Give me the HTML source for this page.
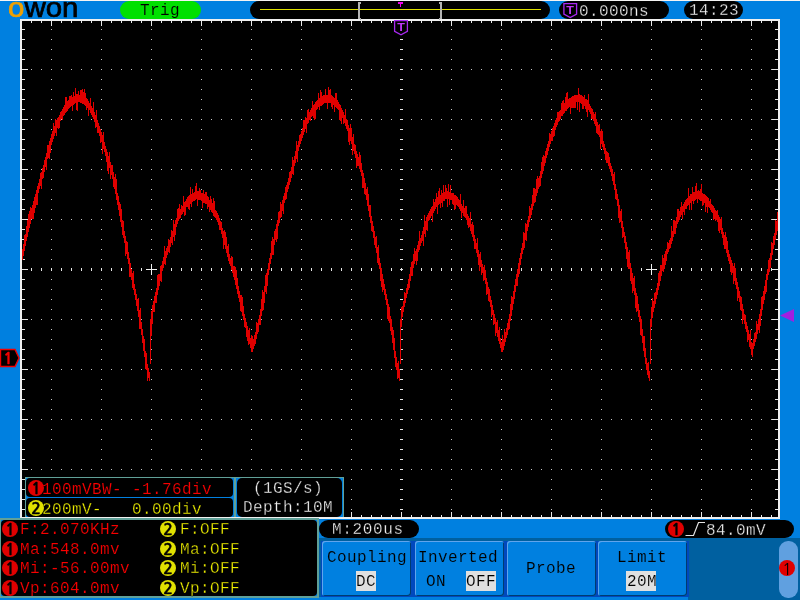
<!DOCTYPE html>
<html><head><meta charset="utf-8"><title>OWON</title>
<style>
html,body{margin:0;padding:0}
body{width:800px;height:600px;background:#0080e0;position:relative;overflow:hidden;font-family:"Liberation Mono",monospace;font-size:16px;letter-spacing:.4px}
div,span{position:absolute;white-space:pre;box-sizing:border-box}
.t{line-height:20px;height:20px;will-change:transform}
.pill{background:#000;border-radius:9px;height:18px}
.w{color:#f0f0f0;-webkit-text-stroke:.3px #000}.r{color:#f80000;-webkit-text-stroke:.18px #000}.y{color:#f0f000;-webkit-text-stroke:.3px #000}.k{color:#000;-webkit-text-stroke:.12px #0080e0}.kg{-webkit-text-stroke-color:#00e000}.kh{-webkit-text-stroke-color:#e0e0e0}
.c{will-change:transform;width:16px;height:16px;border-radius:8px;font:bold 16px/18px "NanumGothic","Liberation Sans",sans-serif;-webkit-text-stroke:.4px;letter-spacing:0;text-align:center;color:#000}
.cr{background:#e00000}.cy{background:#e0e000}
.btn{top:541px;width:89px;height:55px;background:#0080e0;border-radius:3px;box-shadow:inset 1px 1px 0 #60a4ec,inset -1px -1px 0 #003c70}
.hl{background:#e0e0e0;height:20px;top:571px}
svg{position:absolute;left:0;top:0}
</style></head><body>
<!-- top bar -->
<div style="left:0;top:0;width:800px;height:1px;background:#f4f4f4"></div>
<div id="logo" style="will-change:transform;left:8px;top:-7px;font:27px/30px 'Liberation Sans',sans-serif;text-transform:lowercase;letter-spacing:0;color:#000;-webkit-text-stroke:.7px;transform:scaleX(1.09);transform-origin:0 0"><span style="position:static;color:#f0a000">O</span>WON</div>
<div style="left:120px;top:1px;width:81px;height:18px;border-radius:9px;background:#00e000"></div>
<div class="t k kg" style="left:140px;top:1px">Trig</div>
<div class="pill" style="left:250px;top:1px;width:300px"></div>
<div class="pill" style="left:559px;top:1px;width:110px"></div>
<div class="t w" style="left:579px;top:2px">0.000ns</div>
<div class="pill" style="left:684px;top:1px;width:59px"></div>
<div class="t w" style="left:689px;top:1px">14:23</div>
<!-- scope screen -->
<div style="left:20px;top:19px;width:760px;height:500px;background:#000;border:2px solid #f0f0f0"></div>
<svg width="800" height="600" viewBox="0 0 800 600" shape-rendering="crispEdges">
<path d="M51 29.5h1M51 39.5h1M51 49.5h1M51 59.5h1M51 69.5h1M51 79.5h1M51 89.5h1M51 99.5h1M51 109.5h1M51 119.5h1M51 129.5h1M51 139.5h1M51 149.5h1M51 159.5h1M51 169.5h1M51 179.5h1M51 189.5h1M51 199.5h1M51 209.5h1M51 219.5h1M51 229.5h1M51 239.5h1M51 249.5h1M51 259.5h1M51 269.5h1M51 279.5h1M51 289.5h1M51 299.5h1M51 309.5h1M51 319.5h1M51 329.5h1M51 339.5h1M51 349.5h1M51 359.5h1M51 369.5h1M51 379.5h1M51 389.5h1M51 399.5h1M51 409.5h1M51 419.5h1M51 429.5h1M51 439.5h1M51 449.5h1M51 459.5h1M51 469.5h1M51 479.5h1M51 489.5h1M51 499.5h1M51 509.5h1M101 29.5h1M101 39.5h1M101 49.5h1M101 59.5h1M101 69.5h1M101 79.5h1M101 89.5h1M101 99.5h1M101 109.5h1M101 119.5h1M101 129.5h1M101 139.5h1M101 149.5h1M101 159.5h1M101 169.5h1M101 179.5h1M101 189.5h1M101 199.5h1M101 209.5h1M101 219.5h1M101 229.5h1M101 239.5h1M101 249.5h1M101 259.5h1M101 269.5h1M101 279.5h1M101 289.5h1M101 299.5h1M101 309.5h1M101 319.5h1M101 329.5h1M101 339.5h1M101 349.5h1M101 359.5h1M101 369.5h1M101 379.5h1M101 389.5h1M101 399.5h1M101 409.5h1M101 419.5h1M101 429.5h1M101 439.5h1M101 449.5h1M101 459.5h1M101 469.5h1M101 479.5h1M101 489.5h1M101 499.5h1M101 509.5h1M151 29.5h1M151 39.5h1M151 49.5h1M151 59.5h1M151 69.5h1M151 79.5h1M151 89.5h1M151 99.5h1M151 109.5h1M151 119.5h1M151 129.5h1M151 139.5h1M151 149.5h1M151 159.5h1M151 169.5h1M151 179.5h1M151 189.5h1M151 199.5h1M151 209.5h1M151 219.5h1M151 229.5h1M151 239.5h1M151 249.5h1M151 259.5h1M151 269.5h1M151 279.5h1M151 289.5h1M151 299.5h1M151 309.5h1M151 319.5h1M151 329.5h1M151 339.5h1M151 349.5h1M151 359.5h1M151 369.5h1M151 379.5h1M151 389.5h1M151 399.5h1M151 409.5h1M151 419.5h1M151 429.5h1M151 439.5h1M151 449.5h1M151 459.5h1M151 469.5h1M151 479.5h1M151 489.5h1M151 499.5h1M151 509.5h1M201 29.5h1M201 39.5h1M201 49.5h1M201 59.5h1M201 69.5h1M201 79.5h1M201 89.5h1M201 99.5h1M201 109.5h1M201 119.5h1M201 129.5h1M201 139.5h1M201 149.5h1M201 159.5h1M201 169.5h1M201 179.5h1M201 189.5h1M201 199.5h1M201 209.5h1M201 219.5h1M201 229.5h1M201 239.5h1M201 249.5h1M201 259.5h1M201 269.5h1M201 279.5h1M201 289.5h1M201 299.5h1M201 309.5h1M201 319.5h1M201 329.5h1M201 339.5h1M201 349.5h1M201 359.5h1M201 369.5h1M201 379.5h1M201 389.5h1M201 399.5h1M201 409.5h1M201 419.5h1M201 429.5h1M201 439.5h1M201 449.5h1M201 459.5h1M201 469.5h1M201 479.5h1M201 489.5h1M201 499.5h1M201 509.5h1M251 29.5h1M251 39.5h1M251 49.5h1M251 59.5h1M251 69.5h1M251 79.5h1M251 89.5h1M251 99.5h1M251 109.5h1M251 119.5h1M251 129.5h1M251 139.5h1M251 149.5h1M251 159.5h1M251 169.5h1M251 179.5h1M251 189.5h1M251 199.5h1M251 209.5h1M251 219.5h1M251 229.5h1M251 239.5h1M251 249.5h1M251 259.5h1M251 269.5h1M251 279.5h1M251 289.5h1M251 299.5h1M251 309.5h1M251 319.5h1M251 329.5h1M251 339.5h1M251 349.5h1M251 359.5h1M251 369.5h1M251 379.5h1M251 389.5h1M251 399.5h1M251 409.5h1M251 419.5h1M251 429.5h1M251 439.5h1M251 449.5h1M251 459.5h1M251 469.5h1M251 479.5h1M251 489.5h1M251 499.5h1M251 509.5h1M301 29.5h1M301 39.5h1M301 49.5h1M301 59.5h1M301 69.5h1M301 79.5h1M301 89.5h1M301 99.5h1M301 109.5h1M301 119.5h1M301 129.5h1M301 139.5h1M301 149.5h1M301 159.5h1M301 169.5h1M301 179.5h1M301 189.5h1M301 199.5h1M301 209.5h1M301 219.5h1M301 229.5h1M301 239.5h1M301 249.5h1M301 259.5h1M301 269.5h1M301 279.5h1M301 289.5h1M301 299.5h1M301 309.5h1M301 319.5h1M301 329.5h1M301 339.5h1M301 349.5h1M301 359.5h1M301 369.5h1M301 379.5h1M301 389.5h1M301 399.5h1M301 409.5h1M301 419.5h1M301 429.5h1M301 439.5h1M301 449.5h1M301 459.5h1M301 469.5h1M301 479.5h1M301 489.5h1M301 499.5h1M301 509.5h1M351 29.5h1M351 39.5h1M351 49.5h1M351 59.5h1M351 69.5h1M351 79.5h1M351 89.5h1M351 99.5h1M351 109.5h1M351 119.5h1M351 129.5h1M351 139.5h1M351 149.5h1M351 159.5h1M351 169.5h1M351 179.5h1M351 189.5h1M351 199.5h1M351 209.5h1M351 219.5h1M351 229.5h1M351 239.5h1M351 249.5h1M351 259.5h1M351 269.5h1M351 279.5h1M351 289.5h1M351 299.5h1M351 309.5h1M351 319.5h1M351 329.5h1M351 339.5h1M351 349.5h1M351 359.5h1M351 369.5h1M351 379.5h1M351 389.5h1M351 399.5h1M351 409.5h1M351 419.5h1M351 429.5h1M351 439.5h1M351 449.5h1M351 459.5h1M351 469.5h1M351 479.5h1M351 489.5h1M351 499.5h1M351 509.5h1M451 29.5h1M451 39.5h1M451 49.5h1M451 59.5h1M451 69.5h1M451 79.5h1M451 89.5h1M451 99.5h1M451 109.5h1M451 119.5h1M451 129.5h1M451 139.5h1M451 149.5h1M451 159.5h1M451 169.5h1M451 179.5h1M451 189.5h1M451 199.5h1M451 209.5h1M451 219.5h1M451 229.5h1M451 239.5h1M451 249.5h1M451 259.5h1M451 269.5h1M451 279.5h1M451 289.5h1M451 299.5h1M451 309.5h1M451 319.5h1M451 329.5h1M451 339.5h1M451 349.5h1M451 359.5h1M451 369.5h1M451 379.5h1M451 389.5h1M451 399.5h1M451 409.5h1M451 419.5h1M451 429.5h1M451 439.5h1M451 449.5h1M451 459.5h1M451 469.5h1M451 479.5h1M451 489.5h1M451 499.5h1M451 509.5h1M501 29.5h1M501 39.5h1M501 49.5h1M501 59.5h1M501 69.5h1M501 79.5h1M501 89.5h1M501 99.5h1M501 109.5h1M501 119.5h1M501 129.5h1M501 139.5h1M501 149.5h1M501 159.5h1M501 169.5h1M501 179.5h1M501 189.5h1M501 199.5h1M501 209.5h1M501 219.5h1M501 229.5h1M501 239.5h1M501 249.5h1M501 259.5h1M501 269.5h1M501 279.5h1M501 289.5h1M501 299.5h1M501 309.5h1M501 319.5h1M501 329.5h1M501 339.5h1M501 349.5h1M501 359.5h1M501 369.5h1M501 379.5h1M501 389.5h1M501 399.5h1M501 409.5h1M501 419.5h1M501 429.5h1M501 439.5h1M501 449.5h1M501 459.5h1M501 469.5h1M501 479.5h1M501 489.5h1M501 499.5h1M501 509.5h1M551 29.5h1M551 39.5h1M551 49.5h1M551 59.5h1M551 69.5h1M551 79.5h1M551 89.5h1M551 99.5h1M551 109.5h1M551 119.5h1M551 129.5h1M551 139.5h1M551 149.5h1M551 159.5h1M551 169.5h1M551 179.5h1M551 189.5h1M551 199.5h1M551 209.5h1M551 219.5h1M551 229.5h1M551 239.5h1M551 249.5h1M551 259.5h1M551 269.5h1M551 279.5h1M551 289.5h1M551 299.5h1M551 309.5h1M551 319.5h1M551 329.5h1M551 339.5h1M551 349.5h1M551 359.5h1M551 369.5h1M551 379.5h1M551 389.5h1M551 399.5h1M551 409.5h1M551 419.5h1M551 429.5h1M551 439.5h1M551 449.5h1M551 459.5h1M551 469.5h1M551 479.5h1M551 489.5h1M551 499.5h1M551 509.5h1M601 29.5h1M601 39.5h1M601 49.5h1M601 59.5h1M601 69.5h1M601 79.5h1M601 89.5h1M601 99.5h1M601 109.5h1M601 119.5h1M601 129.5h1M601 139.5h1M601 149.5h1M601 159.5h1M601 169.5h1M601 179.5h1M601 189.5h1M601 199.5h1M601 209.5h1M601 219.5h1M601 229.5h1M601 239.5h1M601 249.5h1M601 259.5h1M601 269.5h1M601 279.5h1M601 289.5h1M601 299.5h1M601 309.5h1M601 319.5h1M601 329.5h1M601 339.5h1M601 349.5h1M601 359.5h1M601 369.5h1M601 379.5h1M601 389.5h1M601 399.5h1M601 409.5h1M601 419.5h1M601 429.5h1M601 439.5h1M601 449.5h1M601 459.5h1M601 469.5h1M601 479.5h1M601 489.5h1M601 499.5h1M601 509.5h1M651 29.5h1M651 39.5h1M651 49.5h1M651 59.5h1M651 69.5h1M651 79.5h1M651 89.5h1M651 99.5h1M651 109.5h1M651 119.5h1M651 129.5h1M651 139.5h1M651 149.5h1M651 159.5h1M651 169.5h1M651 179.5h1M651 189.5h1M651 199.5h1M651 209.5h1M651 219.5h1M651 229.5h1M651 239.5h1M651 249.5h1M651 259.5h1M651 269.5h1M651 279.5h1M651 289.5h1M651 299.5h1M651 309.5h1M651 319.5h1M651 329.5h1M651 339.5h1M651 349.5h1M651 359.5h1M651 369.5h1M651 379.5h1M651 389.5h1M651 399.5h1M651 409.5h1M651 419.5h1M651 429.5h1M651 439.5h1M651 449.5h1M651 459.5h1M651 469.5h1M651 479.5h1M651 489.5h1M651 499.5h1M651 509.5h1M701 29.5h1M701 39.5h1M701 49.5h1M701 59.5h1M701 69.5h1M701 79.5h1M701 89.5h1M701 99.5h1M701 109.5h1M701 119.5h1M701 129.5h1M701 139.5h1M701 149.5h1M701 159.5h1M701 169.5h1M701 179.5h1M701 189.5h1M701 199.5h1M701 209.5h1M701 219.5h1M701 229.5h1M701 239.5h1M701 249.5h1M701 259.5h1M701 269.5h1M701 279.5h1M701 289.5h1M701 299.5h1M701 309.5h1M701 319.5h1M701 329.5h1M701 339.5h1M701 349.5h1M701 359.5h1M701 369.5h1M701 379.5h1M701 389.5h1M701 399.5h1M701 409.5h1M701 419.5h1M701 429.5h1M701 439.5h1M701 449.5h1M701 459.5h1M701 469.5h1M701 479.5h1M701 489.5h1M701 499.5h1M701 509.5h1M751 29.5h1M751 39.5h1M751 49.5h1M751 59.5h1M751 69.5h1M751 79.5h1M751 89.5h1M751 99.5h1M751 109.5h1M751 119.5h1M751 129.5h1M751 139.5h1M751 149.5h1M751 159.5h1M751 169.5h1M751 179.5h1M751 189.5h1M751 199.5h1M751 209.5h1M751 219.5h1M751 229.5h1M751 239.5h1M751 249.5h1M751 259.5h1M751 269.5h1M751 279.5h1M751 289.5h1M751 299.5h1M751 309.5h1M751 319.5h1M751 329.5h1M751 339.5h1M751 349.5h1M751 359.5h1M751 369.5h1M751 379.5h1M751 389.5h1M751 399.5h1M751 409.5h1M751 419.5h1M751 429.5h1M751 439.5h1M751 449.5h1M751 459.5h1M751 469.5h1M751 479.5h1M751 489.5h1M751 499.5h1M751 509.5h1M31 69.5h1M41 69.5h1M61 69.5h1M71 69.5h1M81 69.5h1M91 69.5h1M111 69.5h1M121 69.5h1M131 69.5h1M141 69.5h1M161 69.5h1M171 69.5h1M181 69.5h1M191 69.5h1M211 69.5h1M221 69.5h1M231 69.5h1M241 69.5h1M261 69.5h1M271 69.5h1M281 69.5h1M291 69.5h1M311 69.5h1M321 69.5h1M331 69.5h1M341 69.5h1M361 69.5h1M371 69.5h1M381 69.5h1M391 69.5h1M411 69.5h1M421 69.5h1M431 69.5h1M441 69.5h1M461 69.5h1M471 69.5h1M481 69.5h1M491 69.5h1M511 69.5h1M521 69.5h1M531 69.5h1M541 69.5h1M561 69.5h1M571 69.5h1M581 69.5h1M591 69.5h1M611 69.5h1M621 69.5h1M631 69.5h1M641 69.5h1M661 69.5h1M671 69.5h1M681 69.5h1M691 69.5h1M711 69.5h1M721 69.5h1M731 69.5h1M741 69.5h1M761 69.5h1M771 69.5h1M31 119.5h1M41 119.5h1M61 119.5h1M71 119.5h1M81 119.5h1M91 119.5h1M111 119.5h1M121 119.5h1M131 119.5h1M141 119.5h1M161 119.5h1M171 119.5h1M181 119.5h1M191 119.5h1M211 119.5h1M221 119.5h1M231 119.5h1M241 119.5h1M261 119.5h1M271 119.5h1M281 119.5h1M291 119.5h1M311 119.5h1M321 119.5h1M331 119.5h1M341 119.5h1M361 119.5h1M371 119.5h1M381 119.5h1M391 119.5h1M411 119.5h1M421 119.5h1M431 119.5h1M441 119.5h1M461 119.5h1M471 119.5h1M481 119.5h1M491 119.5h1M511 119.5h1M521 119.5h1M531 119.5h1M541 119.5h1M561 119.5h1M571 119.5h1M581 119.5h1M591 119.5h1M611 119.5h1M621 119.5h1M631 119.5h1M641 119.5h1M661 119.5h1M671 119.5h1M681 119.5h1M691 119.5h1M711 119.5h1M721 119.5h1M731 119.5h1M741 119.5h1M761 119.5h1M771 119.5h1M31 169.5h1M41 169.5h1M61 169.5h1M71 169.5h1M81 169.5h1M91 169.5h1M111 169.5h1M121 169.5h1M131 169.5h1M141 169.5h1M161 169.5h1M171 169.5h1M181 169.5h1M191 169.5h1M211 169.5h1M221 169.5h1M231 169.5h1M241 169.5h1M261 169.5h1M271 169.5h1M281 169.5h1M291 169.5h1M311 169.5h1M321 169.5h1M331 169.5h1M341 169.5h1M361 169.5h1M371 169.5h1M381 169.5h1M391 169.5h1M411 169.5h1M421 169.5h1M431 169.5h1M441 169.5h1M461 169.5h1M471 169.5h1M481 169.5h1M491 169.5h1M511 169.5h1M521 169.5h1M531 169.5h1M541 169.5h1M561 169.5h1M571 169.5h1M581 169.5h1M591 169.5h1M611 169.5h1M621 169.5h1M631 169.5h1M641 169.5h1M661 169.5h1M671 169.5h1M681 169.5h1M691 169.5h1M711 169.5h1M721 169.5h1M731 169.5h1M741 169.5h1M761 169.5h1M771 169.5h1M31 219.5h1M41 219.5h1M61 219.5h1M71 219.5h1M81 219.5h1M91 219.5h1M111 219.5h1M121 219.5h1M131 219.5h1M141 219.5h1M161 219.5h1M171 219.5h1M181 219.5h1M191 219.5h1M211 219.5h1M221 219.5h1M231 219.5h1M241 219.5h1M261 219.5h1M271 219.5h1M281 219.5h1M291 219.5h1M311 219.5h1M321 219.5h1M331 219.5h1M341 219.5h1M361 219.5h1M371 219.5h1M381 219.5h1M391 219.5h1M411 219.5h1M421 219.5h1M431 219.5h1M441 219.5h1M461 219.5h1M471 219.5h1M481 219.5h1M491 219.5h1M511 219.5h1M521 219.5h1M531 219.5h1M541 219.5h1M561 219.5h1M571 219.5h1M581 219.5h1M591 219.5h1M611 219.5h1M621 219.5h1M631 219.5h1M641 219.5h1M661 219.5h1M671 219.5h1M681 219.5h1M691 219.5h1M711 219.5h1M721 219.5h1M731 219.5h1M741 219.5h1M761 219.5h1M771 219.5h1M31 319.5h1M41 319.5h1M61 319.5h1M71 319.5h1M81 319.5h1M91 319.5h1M111 319.5h1M121 319.5h1M131 319.5h1M141 319.5h1M161 319.5h1M171 319.5h1M181 319.5h1M191 319.5h1M211 319.5h1M221 319.5h1M231 319.5h1M241 319.5h1M261 319.5h1M271 319.5h1M281 319.5h1M291 319.5h1M311 319.5h1M321 319.5h1M331 319.5h1M341 319.5h1M361 319.5h1M371 319.5h1M381 319.5h1M391 319.5h1M411 319.5h1M421 319.5h1M431 319.5h1M441 319.5h1M461 319.5h1M471 319.5h1M481 319.5h1M491 319.5h1M511 319.5h1M521 319.5h1M531 319.5h1M541 319.5h1M561 319.5h1M571 319.5h1M581 319.5h1M591 319.5h1M611 319.5h1M621 319.5h1M631 319.5h1M641 319.5h1M661 319.5h1M671 319.5h1M681 319.5h1M691 319.5h1M711 319.5h1M721 319.5h1M731 319.5h1M741 319.5h1M761 319.5h1M771 319.5h1M31 369.5h1M41 369.5h1M61 369.5h1M71 369.5h1M81 369.5h1M91 369.5h1M111 369.5h1M121 369.5h1M131 369.5h1M141 369.5h1M161 369.5h1M171 369.5h1M181 369.5h1M191 369.5h1M211 369.5h1M221 369.5h1M231 369.5h1M241 369.5h1M261 369.5h1M271 369.5h1M281 369.5h1M291 369.5h1M311 369.5h1M321 369.5h1M331 369.5h1M341 369.5h1M361 369.5h1M371 369.5h1M381 369.5h1M391 369.5h1M411 369.5h1M421 369.5h1M431 369.5h1M441 369.5h1M461 369.5h1M471 369.5h1M481 369.5h1M491 369.5h1M511 369.5h1M521 369.5h1M531 369.5h1M541 369.5h1M561 369.5h1M571 369.5h1M581 369.5h1M591 369.5h1M611 369.5h1M621 369.5h1M631 369.5h1M641 369.5h1M661 369.5h1M671 369.5h1M681 369.5h1M691 369.5h1M711 369.5h1M721 369.5h1M731 369.5h1M741 369.5h1M761 369.5h1M771 369.5h1M31 419.5h1M41 419.5h1M61 419.5h1M71 419.5h1M81 419.5h1M91 419.5h1M111 419.5h1M121 419.5h1M131 419.5h1M141 419.5h1M161 419.5h1M171 419.5h1M181 419.5h1M191 419.5h1M211 419.5h1M221 419.5h1M231 419.5h1M241 419.5h1M261 419.5h1M271 419.5h1M281 419.5h1M291 419.5h1M311 419.5h1M321 419.5h1M331 419.5h1M341 419.5h1M361 419.5h1M371 419.5h1M381 419.5h1M391 419.5h1M411 419.5h1M421 419.5h1M431 419.5h1M441 419.5h1M461 419.5h1M471 419.5h1M481 419.5h1M491 419.5h1M511 419.5h1M521 419.5h1M531 419.5h1M541 419.5h1M561 419.5h1M571 419.5h1M581 419.5h1M591 419.5h1M611 419.5h1M621 419.5h1M631 419.5h1M641 419.5h1M661 419.5h1M671 419.5h1M681 419.5h1M691 419.5h1M711 419.5h1M721 419.5h1M731 419.5h1M741 419.5h1M761 419.5h1M771 419.5h1M31 469.5h1M41 469.5h1M61 469.5h1M71 469.5h1M81 469.5h1M91 469.5h1M111 469.5h1M121 469.5h1M131 469.5h1M141 469.5h1M161 469.5h1M171 469.5h1M181 469.5h1M191 469.5h1M211 469.5h1M221 469.5h1M231 469.5h1M241 469.5h1M261 469.5h1M271 469.5h1M281 469.5h1M291 469.5h1M311 469.5h1M321 469.5h1M331 469.5h1M341 469.5h1M361 469.5h1M371 469.5h1M381 469.5h1M391 469.5h1M411 469.5h1M421 469.5h1M431 469.5h1M441 469.5h1M461 469.5h1M471 469.5h1M481 469.5h1M491 469.5h1M511 469.5h1M521 469.5h1M531 469.5h1M541 469.5h1M561 469.5h1M571 469.5h1M581 469.5h1M591 469.5h1M611 469.5h1M621 469.5h1M631 469.5h1M641 469.5h1M661 469.5h1M671 469.5h1M681 469.5h1M691 469.5h1M711 469.5h1M721 469.5h1M731 469.5h1M741 469.5h1M761 469.5h1M771 469.5h1" stroke="#c4c4c4" stroke-width="1" fill="none"/>
<path d="M400 29.5h3M400 39.5h3M400 49.5h3M400 59.5h3M400 69.5h3M400 79.5h3M400 89.5h3M400 99.5h3M400 109.5h3M400 119.5h3M400 129.5h3M400 139.5h3M400 149.5h3M400 159.5h3M400 169.5h3M400 179.5h3M400 189.5h3M400 199.5h3M400 209.5h3M400 219.5h3M400 229.5h3M400 239.5h3M400 249.5h3M400 259.5h3M400 269.5h3M400 279.5h3M400 289.5h3M400 299.5h3M400 309.5h3M400 319.5h3M400 329.5h3M400 339.5h3M400 349.5h3M400 359.5h3M400 369.5h3M400 379.5h3M400 389.5h3M400 399.5h3M400 409.5h3M400 419.5h3M400 429.5h3M400 439.5h3M400 449.5h3M400 459.5h3M400 469.5h3M400 479.5h3M400 489.5h3M400 499.5h3M400 509.5h3M31.5 268v3M41.5 268v3M51.5 268v3M61.5 268v3M71.5 268v3M81.5 268v3M91.5 268v3M101.5 268v3M111.5 268v3M121.5 268v3M131.5 268v3M141.5 268v3M151.5 268v3M161.5 268v3M171.5 268v3M181.5 268v3M191.5 268v3M201.5 268v3M211.5 268v3M221.5 268v3M231.5 268v3M241.5 268v3M251.5 268v3M261.5 268v3M271.5 268v3M281.5 268v3M291.5 268v3M301.5 268v3M311.5 268v3M321.5 268v3M331.5 268v3M341.5 268v3M351.5 268v3M361.5 268v3M371.5 268v3M381.5 268v3M391.5 268v3M401.5 268v3M411.5 268v3M421.5 268v3M431.5 268v3M441.5 268v3M451.5 268v3M461.5 268v3M471.5 268v3M481.5 268v3M491.5 268v3M501.5 268v3M511.5 268v3M521.5 268v3M531.5 268v3M541.5 268v3M551.5 268v3M561.5 268v3M571.5 268v3M581.5 268v3M591.5 268v3M601.5 268v3M611.5 268v3M621.5 268v3M631.5 268v3M641.5 268v3M651.5 268v3M661.5 268v3M671.5 268v3M681.5 268v3M691.5 268v3M701.5 268v3M711.5 268v3M721.5 268v3M731.5 268v3M741.5 268v3M751.5 268v3M761.5 268v3M771.5 268v3M31.5 21v2M31.5 517v-2M41.5 21v2M41.5 517v-2M51.5 21v5M51.5 517v-5M61.5 21v2M61.5 517v-2M71.5 21v2M71.5 517v-2M81.5 21v2M81.5 517v-2M91.5 21v2M91.5 517v-2M101.5 21v5M101.5 517v-5M111.5 21v2M111.5 517v-2M121.5 21v2M121.5 517v-2M131.5 21v2M131.5 517v-2M141.5 21v2M141.5 517v-2M151.5 21v5M151.5 517v-5M161.5 21v2M161.5 517v-2M171.5 21v2M171.5 517v-2M181.5 21v2M181.5 517v-2M191.5 21v2M191.5 517v-2M201.5 21v5M201.5 517v-5M211.5 21v2M211.5 517v-2M221.5 21v2M221.5 517v-2M231.5 21v2M231.5 517v-2M241.5 21v2M241.5 517v-2M251.5 21v5M251.5 517v-5M261.5 21v2M261.5 517v-2M271.5 21v2M271.5 517v-2M281.5 21v2M281.5 517v-2M291.5 21v2M291.5 517v-2M301.5 21v5M301.5 517v-5M311.5 21v2M311.5 517v-2M321.5 21v2M321.5 517v-2M331.5 21v2M331.5 517v-2M341.5 21v2M341.5 517v-2M351.5 21v5M351.5 517v-5M361.5 21v2M361.5 517v-2M371.5 21v2M371.5 517v-2M381.5 21v2M381.5 517v-2M391.5 21v2M391.5 517v-2M401.5 21v5M401.5 517v-5M411.5 21v2M411.5 517v-2M421.5 21v2M421.5 517v-2M431.5 21v2M431.5 517v-2M441.5 21v2M441.5 517v-2M451.5 21v5M451.5 517v-5M461.5 21v2M461.5 517v-2M471.5 21v2M471.5 517v-2M481.5 21v2M481.5 517v-2M491.5 21v2M491.5 517v-2M501.5 21v5M501.5 517v-5M511.5 21v2M511.5 517v-2M521.5 21v2M521.5 517v-2M531.5 21v2M531.5 517v-2M541.5 21v2M541.5 517v-2M551.5 21v5M551.5 517v-5M561.5 21v2M561.5 517v-2M571.5 21v2M571.5 517v-2M581.5 21v2M581.5 517v-2M591.5 21v2M591.5 517v-2M601.5 21v5M601.5 517v-5M611.5 21v2M611.5 517v-2M621.5 21v2M621.5 517v-2M631.5 21v2M631.5 517v-2M641.5 21v2M641.5 517v-2M651.5 21v5M651.5 517v-5M661.5 21v2M661.5 517v-2M671.5 21v2M671.5 517v-2M681.5 21v2M681.5 517v-2M691.5 21v2M691.5 517v-2M701.5 21v5M701.5 517v-5M711.5 21v2M711.5 517v-2M721.5 21v2M721.5 517v-2M731.5 21v2M731.5 517v-2M741.5 21v2M741.5 517v-2M751.5 21v5M751.5 517v-5M761.5 21v2M761.5 517v-2M771.5 21v2M771.5 517v-2M22 29.5h3M778 29.5h-3M22 39.5h3M778 39.5h-3M22 49.5h3M778 49.5h-3M22 59.5h3M778 59.5h-3M22 69.5h6M778 69.5h-6M22 79.5h3M778 79.5h-3M22 89.5h3M778 89.5h-3M22 99.5h3M778 99.5h-3M22 109.5h3M778 109.5h-3M22 119.5h6M778 119.5h-6M22 129.5h3M778 129.5h-3M22 139.5h3M778 139.5h-3M22 149.5h3M778 149.5h-3M22 159.5h3M778 159.5h-3M22 169.5h6M778 169.5h-6M22 179.5h3M778 179.5h-3M22 189.5h3M778 189.5h-3M22 199.5h3M778 199.5h-3M22 209.5h3M778 209.5h-3M22 219.5h6M778 219.5h-6M22 229.5h3M778 229.5h-3M22 239.5h3M778 239.5h-3M22 249.5h3M778 249.5h-3M22 259.5h3M778 259.5h-3M22 269.5h6M778 269.5h-6M22 279.5h3M778 279.5h-3M22 289.5h3M778 289.5h-3M22 299.5h3M778 299.5h-3M22 309.5h3M778 309.5h-3M22 319.5h6M778 319.5h-6M22 329.5h3M778 329.5h-3M22 339.5h3M778 339.5h-3M22 349.5h3M778 349.5h-3M22 359.5h3M778 359.5h-3M22 369.5h6M778 369.5h-6M22 379.5h3M778 379.5h-3M22 389.5h3M778 389.5h-3M22 399.5h3M778 399.5h-3M22 409.5h3M778 409.5h-3M22 419.5h6M778 419.5h-6M22 429.5h3M778 429.5h-3M22 439.5h3M778 439.5h-3M22 449.5h3M778 449.5h-3M22 459.5h3M778 459.5h-3M22 469.5h6M778 469.5h-6M22 479.5h3M778 479.5h-3M22 489.5h3M778 489.5h-3M22 499.5h3M778 499.5h-3M22 509.5h3M778 509.5h-3" stroke="#e8e8e8" stroke-width="1" fill="none"/>
<path d="M146 269.5h11M151.5 264v11M646 269.5h11M651.5 264v11" stroke="#f0f0f0" stroke-width="1" fill="none"/>
<path d="M22.5 249V260M23.5 244V256M24.5 235V251M25.5 234V246M26.5 226V241M27.5 220V237M28.5 214V232M29.5 211V228M30.5 207V224M31.5 208V219M32.5 205V219M33.5 201V219M34.5 197V213M35.5 194V208M36.5 190V205M37.5 186V205M38.5 183V193M39.5 179V189M40.5 173V186M41.5 172V189M42.5 168V179M43.5 165V178M44.5 160V172M45.5 157V167M46.5 153V170M47.5 145V159M48.5 145V158M49.5 141V159M50.5 138V153M51.5 134V145M52.5 131V142M53.5 123V139M54.5 126V136M55.5 119V133M56.5 120V136M57.5 118V128M58.5 117V129M59.5 115V128M60.5 112V121M61.5 111V119M62.5 109V120M63.5 107V116M64.5 105V115M65.5 97V113M66.5 97V112M67.5 101V111M68.5 100V109M69.5 96V108M70.5 96V107M71.5 95V106M72.5 97V111M73.5 92V105M74.5 96V104M75.5 88V103M76.5 94V110M77.5 94V111M78.5 91V102M79.5 95V102M80.5 90V103M81.5 90V103M82.5 89V104M83.5 92V104M84.5 89V105M85.5 93V106M86.5 98V110M87.5 99V108M88.5 101V116M89.5 103V110M90.5 98V113M91.5 106V115M92.5 108V117M93.5 102V119M94.5 112V122M95.5 115V128M96.5 110V127M97.5 120V133M98.5 123V133M99.5 126V136M100.5 129V143M101.5 132V142M102.5 135V154M103.5 132V149M104.5 142V152M105.5 146V156M106.5 149V162M107.5 152V171M108.5 156V174M109.5 152V168M110.5 162V179M111.5 165V175M112.5 165V179M113.5 172V187M114.5 177V189M115.5 174V194M116.5 179V200M117.5 193V205M118.5 196V210M119.5 202V216M120.5 204V222M121.5 209V227M122.5 220V235M123.5 221V238M124.5 231V243M125.5 236V256M126.5 241V254M127.5 242V259M128.5 252V264M129.5 258V277M130.5 263V277M131.5 269V280M132.5 273V288M133.5 271V290M134.5 284V295M135.5 289V300M136.5 294V306M137.5 299V311M138.5 298V317M139.5 310V329M140.5 308V329M141.5 322V335M142.5 329V343M143.5 336V351M144.5 339V357M145.5 351V369M146.5 353V370M147.5 364V381M148.5 368V378M149.5 372V381M150.5 319V364M151.5 311V336M152.5 305V324M153.5 301V312M154.5 296V312M155.5 292V303M156.5 288V303M157.5 275V295M158.5 274V290M159.5 274V286M160.5 266V281M161.5 265V282M162.5 261V271M163.5 257V268M164.5 246V264M165.5 251V265M166.5 248V258M167.5 246V255M168.5 239V252M169.5 240V253M170.5 237V247M171.5 230V243M172.5 231V245M173.5 220V237M174.5 224V241M175.5 220V235M176.5 218V227M177.5 209V224M178.5 208V221M179.5 204V219M180.5 209V218M181.5 205V215M182.5 206V214M183.5 196V212M184.5 202V216M185.5 201V215M186.5 199V207M187.5 197V207M188.5 196V209M189.5 195V210M190.5 187V204M191.5 194V207M192.5 189V202M193.5 193V201M194.5 192V201M195.5 186V200M196.5 183V199M197.5 191V206M198.5 191V200M199.5 188V200M200.5 190V200M201.5 193V201M202.5 193V208M203.5 190V203M204.5 194V203M205.5 192V204M206.5 192V204M207.5 196V209M208.5 197V207M209.5 200V212M210.5 196V210M211.5 199V212M212.5 203V213M213.5 198V216M214.5 201V217M215.5 210V218M216.5 211V220M217.5 213V222M218.5 215V225M219.5 218V230M220.5 221V230M221.5 222V234M222.5 228V238M223.5 231V249M224.5 230V245M225.5 232V249M226.5 237V253M227.5 246V257M228.5 244V261M229.5 254V264M230.5 258V266M231.5 256V270M232.5 257V273M233.5 266V277M234.5 266V280M235.5 267V285M236.5 270V289M237.5 278V294M238.5 286V298M239.5 291V302M240.5 295V311M241.5 295V312M242.5 297V316M243.5 306V320M244.5 314V327M245.5 318V328M246.5 322V337M247.5 326V341M248.5 330V345M249.5 328V344M250.5 338V348M251.5 335V352M252.5 336V352M253.5 339V349M254.5 335V346M255.5 332V344M256.5 322V339M257.5 323V334M258.5 319V332M259.5 315V325M260.5 309V325M261.5 299V316M262.5 290V311M263.5 292V310M264.5 286V303M265.5 275V292M266.5 273V294M267.5 269V286M268.5 263V275M269.5 258V270M270.5 253V264M271.5 241V259M272.5 237V255M273.5 239V255M274.5 231V245M275.5 229V240M276.5 224V242M277.5 220V239M278.5 212V226M279.5 211V223M280.5 202V218M281.5 204V217M282.5 200V211M283.5 196V214M284.5 193V203M285.5 187V200M286.5 185V199M287.5 182V192M288.5 178V189M289.5 172V185M290.5 171V182M291.5 167V178M292.5 157V174M293.5 160V175M294.5 156V166M295.5 151V163M296.5 141V159M297.5 145V162M298.5 141V151M299.5 135V147M300.5 134V144M301.5 131V141M302.5 128V138M303.5 120V135M304.5 120V132M305.5 117V129M306.5 118V133M307.5 110V124M308.5 109V123M309.5 112V120M310.5 110V121M311.5 108V117M312.5 101V116M313.5 105V118M314.5 104V120M315.5 102V119M316.5 101V110M317.5 100V109M318.5 93V107M319.5 98V110M320.5 90V106M321.5 92V106M322.5 96V105M323.5 95V104M324.5 95V103M325.5 89V103M326.5 95V103M327.5 95V109M328.5 87V103M329.5 90V103M330.5 89V103M331.5 95V107M332.5 96V109M333.5 97V105M334.5 98V112M335.5 93V107M336.5 93V108M337.5 100V109M338.5 102V110M339.5 104V120M340.5 105V121M341.5 108V124M342.5 110V118M343.5 112V124M344.5 115V123M345.5 109V126M346.5 119V129M347.5 120V131M348.5 125V142M349.5 128V145M350.5 124V141M351.5 128V144M352.5 137V155M353.5 134V151M354.5 144V154M355.5 145V158M356.5 151V168M357.5 154V166M358.5 157V166M359.5 152V169M360.5 155V172M361.5 163V176M362.5 170V188M363.5 173V188M364.5 178V194M365.5 183V195M366.5 189V200M367.5 187V206M368.5 194V211M369.5 205V217M370.5 205V223M371.5 216V231M372.5 221V232M373.5 226V238M374.5 231V245M375.5 237V248M376.5 236V253M377.5 247V263M378.5 245V265M379.5 258V269M380.5 263V281M381.5 268V287M382.5 274V292M383.5 279V290M384.5 284V295M385.5 289V300M386.5 294V305M387.5 299V319M388.5 304V321M389.5 307V323M390.5 316V331M391.5 319V335M392.5 327V343M393.5 330V350M394.5 338V358M395.5 351V367M396.5 357V370M397.5 363V379M398.5 361V378M399.5 369V381M400.5 319V364M401.5 307V327M402.5 306V317M403.5 301V312M404.5 292V307M405.5 293V303M406.5 288V298M407.5 284V294M408.5 279V290M409.5 274V288M410.5 267V281M411.5 262V276M412.5 261V276M413.5 254V268M414.5 248V264M415.5 251V261M416.5 249V265M417.5 245V261M418.5 241V252M419.5 231V250M420.5 238V246M421.5 235V243M422.5 231V241M423.5 227V246M424.5 215V234M425.5 221V237M426.5 217V230M427.5 215V231M428.5 213V221M429.5 211V220M430.5 209V218M431.5 207V216M432.5 206V222M433.5 199V213M434.5 202V211M435.5 199V209M436.5 193V207M437.5 197V214M438.5 191V205M439.5 188V204M440.5 195V208M441.5 190V203M442.5 193V207M443.5 185V201M444.5 192V201M445.5 185V199M446.5 188V199M447.5 191V207M448.5 184V199M449.5 192V205M450.5 185V200M451.5 193V200M452.5 193V204M453.5 193V205M454.5 195V210M455.5 195V209M456.5 196V205M457.5 197V206M458.5 199V207M459.5 200V209M460.5 194V211M461.5 204V218M462.5 206V213M463.5 200V216M464.5 208V217M465.5 206V218M466.5 206V220M467.5 214V225M468.5 216V228M469.5 218V227M470.5 212V231M471.5 224V234M472.5 222V237M473.5 225V241M474.5 235V249M475.5 239V249M476.5 243V253M477.5 238V257M478.5 250V265M479.5 254V271M480.5 252V267M481.5 260V275M482.5 264V273M483.5 267V281M484.5 265V280M485.5 270V284M486.5 278V295M487.5 282V294M488.5 287V301M489.5 289V302M490.5 296V307M491.5 300V317M492.5 305V315M493.5 310V325M494.5 314V324M495.5 318V336M496.5 322V333M497.5 320V337M498.5 330V341M499.5 327V344M500.5 338V348M501.5 342V352M502.5 335V352M503.5 339V350M504.5 329V346M505.5 332V342M506.5 328V338M507.5 323V335M508.5 319V330M509.5 314V329M510.5 304V321M511.5 296V316M512.5 297V310M513.5 291V304M514.5 285V299M515.5 279V292M516.5 274V286M517.5 269V286M518.5 263V277M519.5 258V274M520.5 253V265M521.5 248V259M522.5 243V254M523.5 232V250M524.5 233V248M525.5 223V240M526.5 224V241M527.5 220V231M528.5 216V227M529.5 206V222M530.5 208V218M531.5 204V215M532.5 195V210M533.5 188V206M534.5 188V203M535.5 189V202M536.5 179V196M537.5 176V193M538.5 178V189M539.5 176V187M540.5 171V186M541.5 162V178M542.5 157V174M543.5 155V171M544.5 156V166M545.5 151V163M546.5 148V158M547.5 144V155M548.5 141V151M549.5 133V147M550.5 134V144M551.5 131V141M552.5 128V141M553.5 126V137M554.5 123V136M555.5 120V130M556.5 118V127M557.5 112V125M558.5 112V122M559.5 111V121M560.5 110V119M561.5 103V116M562.5 101V116M563.5 100V114M564.5 103V113M565.5 97V111M566.5 93V111M567.5 92V109M568.5 99V108M569.5 98V107M570.5 98V114M571.5 97V108M572.5 96V108M573.5 96V108M574.5 95V108M575.5 95V108M576.5 95V102M577.5 95V110M578.5 88V102M579.5 94V112M580.5 95V103M581.5 95V104M582.5 96V109M583.5 97V109M584.5 95V106M585.5 99V109M586.5 99V112M587.5 100V117M588.5 94V110M589.5 104V112M590.5 106V114M591.5 108V119M592.5 109V119M593.5 112V121M594.5 114V124M595.5 112V126M596.5 119V133M597.5 122V134M598.5 125V135M599.5 124V137M600.5 131V149M601.5 129V144M602.5 131V147M603.5 141V150M604.5 144V154M605.5 148V160M606.5 151V163M607.5 152V163M608.5 153V166M609.5 157V169M610.5 163V172M611.5 166V176M612.5 169V181M613.5 174V185M614.5 172V190M615.5 184V199M616.5 189V200M617.5 194V206M618.5 199V218M619.5 205V223M620.5 211V222M621.5 209V228M622.5 221V238M623.5 227V237M624.5 232V243M625.5 236V249M626.5 242V259M627.5 247V267M628.5 252V269M629.5 250V269M630.5 263V281M631.5 268V284M632.5 273V293M633.5 278V291M634.5 276V295M635.5 288V308M636.5 293V312M637.5 296V311M638.5 304V317M639.5 310V322M640.5 316V335M641.5 319V336M642.5 329V343M643.5 336V351M644.5 336V357M645.5 348V364M646.5 358V370M647.5 363V375M648.5 362V378M649.5 371V381M650.5 319V364M651.5 307V327M652.5 298V318M653.5 301V312M654.5 293V308M655.5 292V304M656.5 288V299M657.5 283V295M658.5 273V290M659.5 271V286M660.5 265V281M661.5 265V276M662.5 255V271M663.5 258V272M664.5 254V269M665.5 251V265M666.5 249V261M667.5 242V254M668.5 243V252M669.5 240V249M670.5 238V248M671.5 226V244M672.5 231V241M673.5 220V237M674.5 220V234M675.5 221V234M676.5 217V228M677.5 209V224M678.5 209V222M679.5 211V220M680.5 207V217M681.5 202V215M682.5 206V219M683.5 204V212M684.5 202V215M685.5 200V209M686.5 199V209M687.5 198V206M688.5 188V205M689.5 196V210M690.5 194V203M691.5 194V210M692.5 187V201M693.5 192V204M694.5 192V201M695.5 186V200M696.5 183V199M697.5 191V203M698.5 190V199M699.5 191V200M700.5 189V201M701.5 184V201M702.5 193V206M703.5 194V205M704.5 194V203M705.5 195V212M706.5 196V207M707.5 197V213M708.5 198V207M709.5 201V208M710.5 199V210M711.5 204V212M712.5 205V213M713.5 206V220M714.5 208V219M715.5 210V221M716.5 211V220M717.5 210V222M718.5 215V231M719.5 217V233M720.5 219V230M721.5 217V234M722.5 228V238M723.5 232V245M724.5 235V249M725.5 232V249M726.5 237V253M727.5 241V257M728.5 250V261M729.5 254V264M730.5 257V272M731.5 260V275M732.5 263V273M733.5 266V284M734.5 263V281M735.5 268V285M736.5 278V289M737.5 282V301M738.5 287V298M739.5 291V302M740.5 296V310M741.5 297V311M742.5 304V324M743.5 309V320M744.5 314V324M745.5 315V329M746.5 322V332M747.5 326V342M748.5 330V340M749.5 334V347M750.5 330V349M751.5 342V355M752.5 343V357M753.5 339V349M754.5 333V346M755.5 332V342M756.5 321V339M757.5 324V334M758.5 319V330M759.5 314V333M760.5 309V326M761.5 297V316M762.5 296V310M763.5 291V304M764.5 286V300M765.5 280V294M766.5 274V292M767.5 269V280M768.5 260V275M769.5 258V272M770.5 253V268M771.5 242V260M772.5 243V255M773.5 236V249M774.5 233V245M775.5 220V240M776.5 221V235M777.5 212V231" stroke="#e00000" stroke-width="1" fill="none"/>
</svg>
<!-- channel info box -->
<div style="left:25px;top:477px;width:319px;height:40px;background:#0080e0;border:1px solid #60a098;border-bottom:0"></div>
<div style="left:234px;top:477px;width:2px;height:40px;background:#60a098"></div>
<div style="left:26px;top:478px;width:207px;height:19px;background:#000;border-radius:4px"></div>
<div style="left:26px;top:498px;width:207px;height:19px;background:#000;border-radius:4px"></div>
<div style="left:237px;top:478px;width:105px;height:39px;background:#000;border-radius:5px"></div>
<div class="c cr" style="left:27.500px;top:480px">1</div>
<div class="c cy" style="left:27.500px;top:500px">2</div>
<div class="t r" style="left:42px;top:480px">100mVBW- -1.76div</div>
<div class="t y" style="left:42px;top:499.500px">200mV-   0.00div</div>
<div class="t w" style="left:253px;top:479px">(1GS/s)</div>
<div class="t w" style="left:243px;top:498px">Depth:10M</div>
<!-- measurement panel -->
<div style="left:0;top:518px;width:319px;height:80px;background:#0080e0;border:2px solid #60a098;border-left-width:1px"></div>
<div style="left:1px;top:520px;width:316px;height:76px;background:#000;border-radius:4px"></div>
<div class="c cr" style="left:2px;top:521px">1</div>
<div class="c cr" style="left:2px;top:541px">1</div>
<div class="c cr" style="left:2px;top:560px">1</div>
<div class="c cr" style="left:2px;top:579.500px">1</div>
<div class="t r" style="left:20px;top:520px">F:2.070KHz</div>
<div class="t r" style="left:20px;top:540px">Ma:548.0mv</div>
<div class="t r" style="left:20px;top:559px">Mi:-56.00mv</div>
<div class="t r" style="left:20px;top:579px">Vp:604.0mv</div>
<div class="c cy" style="left:160px;top:521px">2</div>
<div class="c cy" style="left:160px;top:541px">2</div>
<div class="c cy" style="left:160px;top:560px">2</div>
<div class="c cy" style="left:160px;top:579.500px">2</div>
<div class="t y" style="left:180px;top:520px">F:OFF</div>
<div class="t y" style="left:180px;top:540px">Ma:OFF</div>
<div class="t y" style="left:180px;top:559px">Mi:OFF</div>
<div class="t y" style="left:180px;top:579px">Vp:OFF</div>
<!-- status pills -->
<div class="pill" style="left:319px;top:520px;width:100px"></div>
<div class="t w" style="left:332px;top:520px;letter-spacing:.65px">M:200us</div>
<div class="pill" style="left:665px;top:520px;width:129px"></div>
<div class="c cr" style="left:667.500px;top:520.500px">1</div>
<div class="t w" style="left:706px;top:521px">84.0mV</div>
<!-- menu -->
<div style="left:319px;top:538px;width:481px;height:62px;background:#0060a0"></div>
<div style="left:321px;top:541px;width:368px;height:56px;background:#0048be"></div>
<div style="left:319px;top:597px;width:369px;height:3px;background:#0080e0"></div>
<div class="btn" style="left:322px"></div>
<div class="btn" style="left:415px"></div>
<div class="btn" style="left:507px"></div>
<div class="btn" style="left:598px"></div>
<div class="t k" style="left:326.500px;top:548px">Coupling</div>
<div class="hl" style="left:356px;width:20px"></div>
<div class="t k kh" style="left:356px;top:572px">DC</div>
<div class="t k" style="left:417.500px;top:548px">Inverted</div>
<div class="t k" style="left:425.500px;top:572px">ON</div>
<div class="hl" style="left:466px;width:30px"></div>
<div class="t k kh" style="left:466px;top:572px">OFF</div>
<div class="t k" style="left:525.500px;top:559px">Probe</div>
<div class="t k" style="left:616.500px;top:548px">Limit</div>
<div class="hl" style="left:626px;width:30px"></div>
<div class="t k kh" style="left:626.500px;top:572px">20M</div>
<div style="left:779px;top:541px;width:19px;height:57px;border-radius:9px;background:#60a0e0"></div>
<div class="c cr" style="left:779px;top:560px;font-weight:normal;-webkit-text-stroke:0">1</div>
<svg width="800" height="600" viewBox="0 0 800 600" shape-rendering="crispEdges">
<!-- memory bar -->
<path d="M260 9.500h281" stroke="#e0e000" stroke-width="1.600"/>
<path d="M359 2v17M360 2.5h1M360 18.5h1M441 2v17M439 2.5h1M439 18.5h1" stroke="#b4b4b4" stroke-width="2" fill="none"/>
<path d="M398 2.750h5M400.500 3.500v3.500" stroke="#f000f0" stroke-width="1.500" fill="none"/>
<g shape-rendering="auto">
<path d="M394.600 20.600h12.800v10.800l-6.400 3.400l-6.400 -3.400z" fill="#000" stroke="#a828f0" stroke-width="1.300"/>
<path d="M563.900 3.600h12.700v10.600l-6.350 3.300l-6.350 -3.300z" fill="#000" stroke="#a828f0" stroke-width="1.300"/>
<path d="M0.5 349.5h14.5l4 8.5l-4 8.5h-14.5z" fill="#000" stroke="#f00000" stroke-width="1.4"/>
<path d="M780 315.500l14 -6.5v13z" fill="#a020e0"/>
<path d="M685.500 535.500h8l5 -13h6.500" stroke="#e4e4e4" stroke-width="1.2" fill="none"/>
</g>
</svg>
<div style="left:394px;top:22px;width:14px;height:12px;font:bold 10px/12px 'Liberation Sans',sans-serif;letter-spacing:0;text-align:center;color:#c038f8;transform:scaleX(1.25);will-change:transform">T</div>
<div style="left:563.200px;top:5px;width:14px;height:12px;font:bold 10px/12px 'Liberation Sans',sans-serif;letter-spacing:0;text-align:center;color:#c038f8;transform:scaleX(1.25);will-change:transform">T</div>
<div style="left:0px;top:349px;width:16px;height:18px;font:bold 16px/20px 'NanumGothic','Liberation Sans',sans-serif;-webkit-text-stroke:.4px;letter-spacing:0;text-align:center;color:#f00000;will-change:transform">1</div>
</body></html>
